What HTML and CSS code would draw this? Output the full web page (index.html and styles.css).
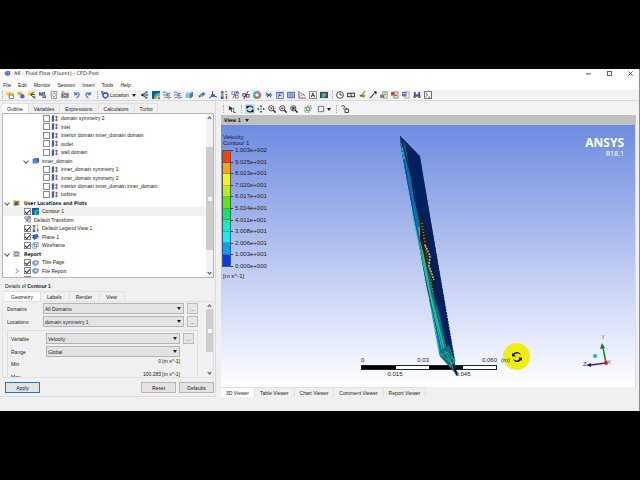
FILE: index.html
```
<!DOCTYPE html>
<html lang="en">
<head>
<meta charset="utf-8">
<title>A6 : Fluid Flow (Fluent) - CFD-Post</title>
<link rel="stylesheet" href="styles.css">
</head>
<body>
<svg class="defs" aria-hidden="true">
<defs>
<symbol id="app" viewBox="0 0 9 9"><path d="M1 3l3-2 4 1v4L5 8 1 6z" fill="#4653c4"/><path d="M2 4c1-2 4-2 5 0M2 5c2 2 4 2 5 0" stroke="#bcd3ff" fill="none"/></symbol>
<symbol id="load" viewBox="0 0 9 9"><path d="M0 1h6v4H0z" fill="#f5d442"/><path d="M3.5 3.5h5v5h-5z" fill="#fff" stroke="#6b5b2a" stroke-width=".8"/><path d="M4 5h4" stroke="#d9a520"/></symbol>
<symbol id="loadball" viewBox="0 0 9 9"><path d="M0 1h6v4H0z" fill="#f5d442"/><circle cx="6" cy="6" r="2.5" fill="#4668e8"/><path d="M2 2l3 2" stroke="#665"/></symbol>
<symbol id="loadarrow" viewBox="0 0 9 9"><path d="M0 1h6v4H0z" fill="#f5d442"/><path d="M7 1L3 4l4 4M3 4h5" stroke="#333" fill="none"/><circle cx="7" cy="7" r="1.3" fill="#278b35"/></symbol>
<symbol id="save" viewBox="0 0 9 9"><path d="M0 1h5v4H0zM4 5h4v3H4z" fill="#59628b"/><path d="M1 2h3M5 6h2" stroke="#dde"/><path d="M6 1v4" stroke="#333"/></symbol>
<symbol id="refresh" viewBox="0 0 9 9"><path d="M1.5.5h6v8h-6z" fill="#fff" stroke="#777" stroke-width=".8"/><path d="M3 4l2-2 1 2M6 5L4 7 3 5" stroke="#338b3f" fill="none"/></symbol>
<symbol id="camera" viewBox="0 0 9 9"><path d="M.5 2.5h8v5h-8z" fill="#ccc" stroke="#777" stroke-width=".8"/><path d="M1 1h2M7 3v4M2 3v4" stroke="#555"/><circle cx="4.5" cy="5" r="1.5" fill="#eee" stroke="#444" stroke-width=".8"/></symbol>
<symbol id="undo" viewBox="0 0 9 9"><path d="M2 1v3h3M2 4c2-3 5-2 5 0S5 7 4 8" fill="none" stroke="#4a78c8" stroke-width="1.3"/></symbol>
<symbol id="redo" viewBox="0 0 9 9"><path d="M7 1v3H4M7 4C5 1 2 2 2 4s2 3 3 4" fill="none" stroke="#4a78c8" stroke-width="1.3"/></symbol>
<symbol id="location" viewBox="0 0 9 9"><path d="M1 3l3-2 4 1 1 4-4 3-3-2z" fill="#2855c8"/><path d="M3 4l2-1 2 1v2L5 7 3 6z" fill="#e9f1ff"/><path d="M1 0v3M0 1h3" stroke="#16307a" stroke-width=".8"/></symbol>
<symbol id="vector" viewBox="0 0 9 9"><path d="M1 4.5h6M1 4.5L6 1.5M1 4.5L6 7.5" stroke="#333"/><path d="M5 0l3 1-2 2zM6 3l3 1.5L6 6zM5 9l3-1-2-2z" fill="#3a6ac0"/><circle cx="1.5" cy="4.5" r="1.3" fill="#26374d"/></symbol>
<symbol id="contour" viewBox="0 0 9 9"><path d="M0 0h9v9H0z" fill="#17589f"/><path d="M2 9c0-4 2-7 7-7v7z" fill="#22c7b3"/><path d="M4 9c0-2 2-4 5-4v4z" fill="#e7d83c"/><path d="M7 9V7h2v2z" fill="#e13d22"/></symbol>
<symbol id="contouritem" viewBox="0 0 9 9"><path d="M0 0h9v9H0z" fill="#17589f"/><path d="M3 9V5c0-2 2-3 6-3v2C6 4 6 5 6 6s1 1 3 1v2z" fill="#22b7c3"/><path d="M7 9V7h2v2z" fill="#e1502f"/></symbol>
<symbol id="stream" viewBox="0 0 9 9"><path d="M0 2c3-3 4 3 8 0M0 5c3-3 5 3 8 0M1 8c3-3 4 2 8-1" fill="none" stroke="#44658e"/><circle cx="5" cy="4.5" r="1.4" fill="#718bb0"/></symbol>
<symbol id="volume" viewBox="0 0 9 9"><path d="M1 3l2-2h6v5L7 8H1z" fill="#347ec2"/><path d="M1 3h5v5H1z" fill="#8bbde2"/><path d="M1 3l2-2h6L7 3z" fill="#b8e1ef"/><path d="M6 3l3-2M6 3v5" stroke="#245681" stroke-width=".7"/></symbol>
<symbol id="line" viewBox="0 0 9 9"><path d="M1 7l3-4 1 3 3-4" fill="none" stroke="#304b97"/><circle cx="2" cy="6" r="1.2" fill="#3954ae"/><circle cx="6" cy="3" r="1.4" fill="#3954ae"/></symbol>
<symbol id="axis" viewBox="0 0 9 9"><path d="M4 0v5l5 2M4 5L0 8" fill="none" stroke="#333"/><path d="M2 4l4-1 1 3-4 1z" fill="#3867be"/></symbol>
<symbol id="legend" viewBox="0 0 9 9"><path d="M1 0h3v3H1z" fill="#e34b3b"/><path d="M1 3h3v3H1z" fill="#35d4b0"/><path d="M1 6h3v3H1z" fill="#3050c7"/><path d="M6 1h2M6 4h2M6 7h2" stroke="#444"/><path d="M7.5 5v4" stroke="#c2323c"/></symbol>
<symbol id="transform" viewBox="0 0 9 9"><path d="M1 1h3v3H1zM5 5h3v3H5z" fill="#fff" stroke="#6274a7"/><path d="M7 1L2 8M5 1l3 0v3" stroke="#353d64" fill="none"/></symbol>
<symbol id="clip" viewBox="0 0 9 9"><path d="M1 3h3v3H1zM5 4h3v3H5z" fill="#e8ecf4" stroke="#445"/><path d="M7 0L2 9" stroke="#333"/></symbol>
<symbol id="wheel" viewBox="0 0 9 9"><path d="M4.5 4.5V0A4.5 4.5 0 0 1 9 4.5z" fill="#db5bd0"/><path d="M4.5 4.5H9A4.5 4.5 0 0 1 4.5 9z" fill="#ef5b49"/><path d="M4.5 4.5V9A4.5 4.5 0 0 1 0 4.5z" fill="#3fb768"/><path d="M4.5 4.5H0A4.5 4.5 0 0 1 4.5 0z" fill="#31bde3"/><circle cx="4.5" cy="4.5" r="1.8" fill="#fff"/></symbol>
<symbol id="var" viewBox="0 0 9 9"><path d="M1 2l6 5M7 2L2 7M1 4.5h7" stroke="#26417a" stroke-width="1.1"/></symbol>
<symbol id="expr" viewBox="0 0 9 9"><path d="M.5 1.5h8v7h-8z" fill="#d5dcf5" stroke="#6278ae"/><path d="M1 2h7" stroke="#3657b3"/><path d="M5 3C3 3 4 7 2 7M3 5h3" fill="none" stroke="#3a4db0"/></symbol>
<symbol id="table" viewBox="0 0 9 9"><path d="M.5 1.5h8v6h-8z" fill="#dbe5fa" stroke="#39569d"/><path d="M0 3.5h9M0 5.5h9M3.5 2v6M6 2v6" stroke="#5b76b4" stroke-width=".8"/></symbol>
<symbol id="chart" viewBox="0 0 9 9"><path d="M1 0v8h8" fill="none" stroke="#555"/><path d="M2 2l3 1 3 3M2 6l3-2 3 1" fill="none" stroke="#a05a62" stroke-width=".8"/></symbol>
<symbol id="comment" viewBox="0 0 9 9"><path d="M.5.5h8v8h-8z" fill="#fff" stroke="#777"/><path d="M2.5 7l2-5 2 5M3 5.3h3" stroke="#333" fill="none"/></symbol>
<symbol id="figure" viewBox="0 0 9 9"><path d="M0 1h9v7H0z" fill="#36448c"/><path d="M2 3l3-1 2 2-2 4-3-1z" fill="#30bf60"/><path d="M5 3l3 1-2 3z" fill="#e64930"/><path d="M4 3l2 1-1 1z" fill="#f2e343"/></symbol>
<symbol id="clock" viewBox="0 0 9 9"><circle cx="4.5" cy="4.5" r="3.8" fill="#fff" stroke="#333"/><path d="M4.5 2v2.5H7" fill="none" stroke="#333"/></symbol>
<symbol id="film" viewBox="0 0 9 9"><path d="M0 2h9v5H0z" fill="#333"/><path d="M1 3.2h3v2.6H1zM5 3.2h3v2.6H5z" fill="#e6e6e6"/></symbol>
<symbol id="quick" viewBox="0 0 9 9"><path d="M1 7h6L6 4z" fill="#d7cf39"/><path d="M8 0L3 6M2 5l4 1" stroke="#464b2d"/><path d="M5 4h3v3H5z" fill="#7aa544"/></symbol>
<symbol id="probe" viewBox="0 0 9 9"><path d="M1 8l5-5" stroke="#444" stroke-width="1.2"/><path d="M5 1l3 3 1-3-2-1z" fill="#333"/></symbol>
<symbol id="page" viewBox="0 0 9 9"><path d="M3 0h5v8H3z" fill="#f7f1d5" stroke="#767055" stroke-width=".7"/><path d="M0 4h5v4H0z" fill="#759a78"/><path d="M4 2h3M5 4h2M1 6h3" stroke="#555" stroke-width=".7"/></symbol>
<symbol id="pagered" viewBox="0 0 9 9"><path d="M3 1h5v7H3z" fill="#ead6b7" stroke="#8a6e50" stroke-width=".7"/><path d="M0 1h4v4H0z" fill="#b34d43"/><path d="M4 5h3" stroke="#655"/></symbol>
<symbol id="pageblue" viewBox="0 0 9 9"><path d="M3 1h5v7H3z" fill="#f1eee1" stroke="#888" stroke-width=".7"/><path d="M0 1h5v5H0z" fill="#616bc5"/><path d="M1 3h3M6 6h1" stroke="#eef"/></symbol>
<symbol id="fan" viewBox="0 0 9 9"><path d="M1 1h2v3h3V1h2v7H6V6H3v2H1z" fill="#374f91"/><path d="M0 6h9" stroke="#65749c"/></symbol>
<symbol id="cmd" viewBox="0 0 9 9"><path d="M.5.5h8v8h-8z" fill="#fff" stroke="#555"/><path d="M2 2l2 2.3L2 6.5M5 6.8h2" fill="none" stroke="#333"/></symbol>
<symbol id="pick" viewBox="0 0 9 9"><path d="M1 1l5 3-2 .5 1 3-1 .5-1-3-2 1z" fill="#333"/><path d="M6.5 3v5.500H9" fill="none" stroke="#555"/></symbol>
<symbol id="rotate" viewBox="0 0 9 9"><path d="M1 4V1.5h2.5M1.5 3.5C3 .5 6 .5 8 3M8 5v2.5H5.500M7.500 5.500C6 8.500 3 8.500 1 6" fill="none" stroke="#111" stroke-width="1.2"/></symbol>
<symbol id="pan" viewBox="0 0 9 9"><path d="M4.500 0L3 2h3zM4.500 9L3 7h3zM0 4.500L2 3v3zM9 4.500L7 3v3z" fill="#222"/><path d="M4.500 3v3M3 4.500h3" stroke="#777" stroke-width=".7"/></symbol>
<symbol id="zoom" viewBox="0 0 9 9"><circle cx="3.700" cy="3.700" r="2.900" fill="#fff" stroke="#333"/><path d="M6 6l2.600 2.600" stroke="#222" stroke-width="1.500"/><path d="M2.300 3.700h3M3.700 2.300v3" stroke="#444" stroke-width=".8"/></symbol>
<symbol id="zoombox" viewBox="0 0 9 9"><circle cx="3.700" cy="3.700" r="2.900" fill="#fff" stroke="#333"/><path d="M2.300 2.300h3v3h-3z" fill="#34466e"/><path d="M6 6l2.600 2.600" stroke="#222" stroke-width="1.500"/></symbol>
<symbol id="fit" viewBox="0 0 9 9"><path d="M1 3l3-2h4v4L6 8H1z" fill="#dcebdc" stroke="#3f9052" stroke-dasharray="2 1"/><path d="M3 3h3v3H3z" fill="#fff" stroke="#4a5a4d" stroke-width=".8"/></symbol>
<symbol id="square" viewBox="0 0 9 9"><path d="M1.500 1.500h6v6h-6z" fill="#f2f2ff" stroke="#666682"/></symbol>
<symbol id="help" viewBox="0 0 9 9"><path d="M1 2c0-2 3-2 3 0 0 1-1 1-1 3M4.500 4.500h4v4h-4zM6 3v2" fill="none" stroke="#333"/></symbol>
<symbol id="boundary" viewBox="0 0 9 9"><path d="M1 1l3-1v8L1 9z" fill="#2b67b9"/><path d="M5 2.500h4M5 6.500h4M7 1v7" stroke="#9e3548"/></symbol>
<symbol id="box" viewBox="0 0 9 9"><path d="M1 3l2-1.500h6V6L7.500 8H1z" fill="#3153b5"/><path d="M1 3h6v5H1z" fill="#5a84df"/></symbol>
<symbol id="plots" viewBox="0 0 9 9"><path d="M0 1h3l1 1h5v7H0z" fill="#ead465"/><path d="M2 3h5v5H2z" fill="#308f54"/><path d="M4 3h3v3H4z" fill="#d34936"/><path d="M2 5h3v3H2z" fill="#304aa5"/></symbol>
<symbol id="report" viewBox="0 0 9 9"><path d="M0 1h3l1 1h5v7H0z" fill="#ead465"/><path d="M2 2h5v6H2z" fill="#6e8ddf"/><path d="M3 4h3v2H3z" fill="#dbe7ff"/></symbol>
<symbol id="plane" viewBox="0 0 9 9"><path d="M0 3l7-2 2 4-6 4z" fill="#3f69d4"/><path d="M2 2v6M0 6h3" stroke="#243c8c" stroke-width=".8"/></symbol>
<symbol id="wire" viewBox="0 0 9 9"><path d="M1 3h5v5H1zM3 1h5v5H6M1 3l2-2M6 3l2-2M3 1v5h3" fill="none" stroke="#4b7292" stroke-width=".8"/></symbol>
<symbol id="pageitem" viewBox="0 0 9 9"><path d="M0 4l4-3 5 2-1 4-4 2-3-2z" fill="#7492de"/><path d="M3 4l3-1 1 2-3 2z" fill="#d1defc"/></symbol>
</defs>
</svg>

<div class="window">
  <header class="titlebar">
    <svg class="icon"><use href="#app"/></svg>
    <span class="title">A6 : Fluid Flow (Fluent) - CFD-Post</span>
    <div class="winbuttons">
      <button aria-label="Minimize"><svg viewBox="0 0 6 6"><path d="M0 3.500h6"/></svg></button>
      <button aria-label="Maximize"><svg viewBox="0 0 6 6"><path d="M.5.5h5v5h-5z"/></svg></button>
      <button aria-label="Close"><svg viewBox="0 0 6 6"><path d="M.5.5l5 5M5.500.5l-5 5"/></svg></button>
    </div>
  </header>
  <nav class="menubar"><button>File</button><button>Edit</button><button>Monitor</button><button>Session</button><button>Insert</button><button>Tools</button><button>Help</button></nav>

  <div class="toolbar main-tools">
    <i class="grip"></i>
    <div class="group g63"><button aria-label="Load results"><svg><use href="#load"/></svg></button><button aria-label="Load state"><svg><use href="#loadball"/></svg></button><button aria-label="Import"><svg><use href="#loadarrow"/></svg></button><button aria-label="Save"><svg><use href="#save"/></svg></button><button aria-label="Refresh"><svg><use href="#refresh"/></svg></button><button aria-label="Snapshot"><svg><use href="#camera"/></svg></button></div>
    <div class="group g19"><button aria-label="Undo"><svg><use href="#undo"/></svg></button><button aria-label="Redo"><svg><use href="#redo"/></svg></button></div>
    <i class="grip"></i>
    <button class="location"><svg><use href="#location"/></svg>Location<i class="caret"></i></button>
    <div class="group g52"><button aria-label="Vector"><svg><use href="#vector"/></svg></button><button aria-label="Contour"><svg><use href="#contour"/></svg></button><button aria-label="Streamline"><svg><use href="#stream"/></svg></button><button aria-label="Particle track"><svg><use href="#stream"/></svg></button><button aria-label="Volume rendering"><svg><use href="#volume"/></svg></button></div>
    <div class="group g63"><button aria-label="Line"><svg><use href="#line"/></svg></button><button aria-label="Coordinate frame"><svg><use href="#axis"/></svg></button><button aria-label="Legend"><svg><use href="#legend"/></svg></button><button aria-label="Instance transform"><svg><use href="#transform"/></svg></button><button aria-label="Clip plane"><svg><use href="#clip"/></svg></button><button aria-label="Color map"><svg><use href="#wheel"/></svg></button></div>
    <div class="group g63"><button aria-label="Variable"><svg><use href="#var"/></svg></button><button aria-label="Expression"><svg><use href="#expr"/></svg></button><button aria-label="Table"><svg><use href="#table"/></svg></button><button aria-label="Chart"><svg><use href="#chart"/></svg></button><button aria-label="Comment"><svg><use href="#comment"/></svg></button><button aria-label="Figure"><svg><use href="#figure"/></svg></button></div>
    <i class="grip"></i>
    <div class="group g96"><button aria-label="Timestep"><svg><use href="#clock"/></svg></button><button aria-label="Animation"><svg><use href="#film"/></svg></button><button aria-label="Quick editor"><svg><use href="#quick"/></svg></button><button aria-label="Probe"><svg><use href="#probe"/></svg></button><button aria-label="Function calculator"><svg><use href="#page"/></svg></button><button aria-label="Macro calculator"><svg><use href="#pagered"/></svg></button><button aria-label="Mesh calculator"><svg><use href="#pageblue"/></svg></button><button aria-label="Turbo"><svg><use href="#fan"/></svg></button><button aria-label="Command editor"><svg><use href="#cmd"/></svg></button></div>
  </div>

  <main class="work">
    <section class="side">
      <div class="tabs"><button class="on">Outline</button><button>Variables</button><button>Expressions</button><button>Calculators</button><button>Turbo</button></div>
      <div class="treebox">
        <ul class="tree">
          <li class="l3"><label><input type="checkbox"><svg><use href="#boundary"/></svg>domain symmetry 2</label></li>
          <li class="l3"><label><input type="checkbox"><svg><use href="#boundary"/></svg>inlet</label></li>
          <li class="l3"><label><input type="checkbox"><svg><use href="#boundary"/></svg>interior domain inner_domain domain</label></li>
          <li class="l3"><label><input type="checkbox"><svg><use href="#boundary"/></svg>outlet</label></li>
          <li class="l3"><label><input type="checkbox"><svg><use href="#boundary"/></svg>wall domain</label></li>
          <li class="l2"><i class="open"></i><svg><use href="#box"/></svg>inner_domain</li>
          <li class="l3"><label><input type="checkbox"><svg><use href="#boundary"/></svg>inner_domain symmetry 1</label></li>
          <li class="l3"><label><input type="checkbox"><svg><use href="#boundary"/></svg>inner_domain symmetry 2</label></li>
          <li class="l3"><label><input type="checkbox"><svg><use href="#boundary"/></svg>interior domain inner_domain inner_domain</label></li>
          <li class="l3"><label><input type="checkbox"><svg><use href="#boundary"/></svg>turbine</label></li>
          <li class="l0"><i class="open"></i><svg><use href="#plots"/></svg>User Locations and Plots</li>
          <li class="l1 selected"><label><input type="checkbox" checked><svg><use href="#contouritem"/></svg>Contour 1</label></li>
          <li class="l1"><svg><use href="#transform"/></svg>Default Transform</li>
          <li class="l1"><label><input type="checkbox" checked><svg><use href="#legend"/></svg>Default Legend View 1</label></li>
          <li class="l1"><label><input type="checkbox" checked><svg><use href="#plane"/></svg>Plane 1</label></li>
          <li class="l1"><label><input type="checkbox" checked><svg><use href="#wire"/></svg>Wireframe</label></li>
          <li class="l0"><i class="open"></i><svg><use href="#report"/></svg>Report</li>
          <li class="l1"><label><input type="checkbox" checked><svg><use href="#pageitem"/></svg>Title Page</label></li>
          <li class="l1 shut"><i class="closed"></i><label><input type="checkbox" checked><svg><use href="#pageitem"/></svg>File Report</label></li>
          <li class="l1 shut"><i class="closed"></i><label><input type="checkbox" checked><svg><use href="#pageitem"/></svg>Mesh Report</label></li>
        </ul>
        <div class="scroll tree-scroll"><i class="up"></i><span class="track"><b></b></span><i class="down"></i></div>
      </div>

      <h2 class="details-title">Details of <b>Contour 1</b></h2>
      <div class="tabs detail-tabs"><button class="on">Geometry</button><button>Labels</button><button>Render</button><button>View</button></div>
      <div class="details">
        <form class="form">
          <div class="field"><label for="domains">Domains</label><span class="pick"><select id="domains"><option>All Domains</option></select></span><button type="button" aria-label="Choose domains">...</button></div>
          <div class="field"><label for="locations">Locations</label><span class="pick"><select id="locations"><option>domain symmetry 1</option></select></span><button type="button" aria-label="Choose locations">...</button></div>
          <div class="box">
            <div class="field"><label for="variable">Variable</label><span class="pick"><select id="variable"><option>Velocity</option></select></span><button type="button" aria-label="Choose variable">...</button></div>
            <div class="field wide"><label for="range">Range</label><span class="pick"><select id="range"><option>Global</option></select></span></div>
            <div class="value"><span>Min</span><output>0 [m s^-1]</output></div>
            <div class="value"><span>Max</span><output>100.283 [m s^-1]</output></div>
          </div>
        </form>
        <div class="scroll detail-scroll"><i class="up"></i><span class="track"><b></b></span><i class="down"></i></div>
      </div>
      <div class="actions"><button class="apply">Apply</button><button>Reset</button><button>Defaults</button></div>
    </section>

    <section class="view">
      <div class="toolbar view-tools">
        <i class="grip"></i><button aria-label="Select"><svg><use href="#pick"/></svg></button>
        <i class="grip"></i>
        <div class="group g52"><button class="active" aria-label="Rotate"><svg><use href="#rotate"/></svg></button><button aria-label="Pan"><svg><use href="#pan"/></svg></button><button aria-label="Zoom"><svg><use href="#zoom"/></svg></button><button aria-label="Zoom in"><svg><use href="#zoom"/></svg></button><button aria-label="Zoom box"><svg><use href="#zoombox"/></svg></button></div>
        <button aria-label="Fit view"><svg><use href="#fit"/></svg></button>
        <button class="layout" aria-label="Viewport layout"><svg><use href="#square"/></svg><i class="caret"></i></button>
        <i class="grip"></i><button aria-label="Help"><svg><use href="#help"/></svg></button>
      </div>
      <button class="viewbar">View 1<i class="caret"></i></button>
      <div class="canvas">
        <div class="legend">
          <p>Velocity<br>Contour 1</p>
          <div class="scale">
            <div class="bands"><i class="c1"></i><i class="c2"></i><i class="c3"></i><i class="c4"></i><i class="c5"></i><i class="c6"></i><i class="c7"></i><i class="c8"></i><i class="c9"></i><i class="c10"></i></div>
            <ol><li>1.003e+002</li><li>9.025e+001</li><li>8.023e+001</li><li>7.020e+001</li><li>6.017e+001</li><li>5.014e+001</li><li>4.011e+001</li><li>3.008e+001</li><li>2.006e+001</li><li>1.003e+001</li><li>0.000e+000</li></ol>
          </div>
          <p>[m s^-1]</p>
        </div>
        <div class="brand"><b>ANSYS</b><span>R18.1</span></div>
        <div class="cursor"><svg viewBox="0 0 12 12"><path d="M1 2v3.500h4L3.500 4C5 2 8 2 10 4.500 9 0 4 0 2.300 3zM11 10V6.500H7L8.500 8C7 10 4 10 2 7.500 3 12 8 12 9.700 9z" fill="#161c12"/></svg></div>
        <div class="ruler">
          <div class="above"><span>0</span><span>0.03</span><span>0.060</span><span class="unit">(m)</span></div>
          <div class="bar"><i></i><i></i><i></i><i></i></div>
          <div class="below"><span>0.015</span><span>0.045</span></div>
        </div>
        <svg class="blade" viewBox="0 0 60 242" aria-hidden="true">
          <path d="M1 1L21 21 56 230 58 240 41 221 2 13z" fill="#07296b"/>
          <path d="M1 1L6 10 52 232 57 239 41 221 2 13z" fill="#0b6fa4"/>
          <path d="M7 11L20 21 56 228 50 224 14 58z" fill="#02205f"/>
          <path d="M3 13L41 221" stroke="#19bfcf" stroke-width="1.500" stroke-dasharray="3 1"/>
          <path d="M5 25L16 85 28 150 45 223" stroke="#0a4f9f" stroke-width="1.500" fill="none"/>
          <path d="M13 77L44 219" stroke="#15cbb4" stroke-width="1"/>
          <path d="M20 92L22 108 31 158 45 213" fill="none" stroke="#2ccc5c" stroke-width="1.500"/>
          <path d="M21 78L26 92 36 146 38 173 30 140 21 105z" fill="#211d1c"/>
          <path d="M23 88L27 116 34 158" fill="none" stroke="#8a8678" stroke-width="1.500" stroke-dasharray="1 2"/>
          <path d="M26 110L31 121 30 131 35 145" stroke="#aebdd4" fill="none" stroke-width="1.500" stroke-dasharray="2 1"/>
          <path d="M1 1L20 21 56 227" fill="none" stroke="#17203b" stroke-width="1" stroke-dasharray="2 1"/>
          <path d="M2 3L12 40" stroke="#102b40" stroke-width="1.500"/>
          <path d="M40 217L50 210 55 224 57 238z" fill="#0d7180"/>
          <path d="M41 221L48 217 56 226 50 231M46 216L57 238M41 218L55 231" fill="none" stroke="#22ad82" stroke-width="1"/>
          <path d="M54 229L58 240" stroke="#10181c" stroke-width="2"/>
        </svg>
        <svg class="triad" viewBox="0 0 32 36">
          <path d="M23 28L20 13" stroke="#168a1c" stroke-width="1.500"/><path d="M19 8l-2 6 5-1z" fill="#0d8416"/>
          <path d="M23 28L8 30" stroke="#2525b5" stroke-width="1.500"/><path d="M3 30l5-2v4z" fill="#1b1b9a"/>
          <circle cx="12" cy="21" r="2" fill="#10b6bd"/><circle cx="23" cy="28" r="2" fill="#e01818"/>
          <text x="18" y="4" fill="#359653">Y</text><text x="0" y="31" fill="#2a2aa8">Z</text><text x="24" y="29" fill="#d3435d">X</text>
        </svg>
      </div>
      <div class="tabs view-tabs"><button class="on">3D Viewer</button><button>Table Viewer</button><button>Chart Viewer</button><button>Comment Viewer</button><button>Report Viewer</button></div>
    </section>
  </main>
  <footer class="status"></footer>
</div>
</body>
</html>
```
FILE: styles.css
```
* { box-sizing: border-box; }
body {
  margin: 0;
  height: 100vh;
  padding: 69px 0;
  display: flex;
  background: #000;
  color: #222;
  font: 5px/8px "Liberation Sans", sans-serif;
}
button, select, input { font: inherit; color: inherit; margin: 0; padding: 0; border: 0; background: none; }
ul, ol, p, h2 { margin: 0; padding: 0; list-style: none; font: inherit; }
i { font-style: normal; }
svg { display: block; flex: none; }
.defs { position: absolute; width: 0; height: 0; }

.window { flex: 1; min-width: 0; display: flex; flex-direction: column; background: #f0f0f0; border-right: 1px solid #c9707c; }

.titlebar { display: flex; flex: none; align-items: center; gap: 3px; height: 10px; padding: 0 6px 2px 4px; background: #fff; }
.titlebar .icon { width: 7px; height: 7px; }
.title { flex: 1; font-family: "DejaVu Sans", sans-serif; }
.winbuttons { display: flex; gap: 16px; }
.winbuttons svg { width: 5px; height: 5px; fill: none; stroke: #333; stroke-width: 1; }
.menubar { display: flex; flex: none; gap: 7px; height: 11px; padding: 0 3px; background: #fff; align-items: center; }

.toolbar { display: flex; flex: none; align-items: center; background: #f3f3f3; }
.toolbar svg { width: 8px; height: 8px; }
.toolbar button { flex: none; }
.main-tools { height: 11px; padding: 0 2px; border-bottom: 1px solid #d8d8d8; }
.grip { width: 1px; height: 8px; margin: 0 3px 0 0; border-left: 1px dotted #aaa; }
.group { display: flex; justify-content: space-between; margin-right: 5px; }
.g19 { width: 19px; }
.g52 { width: 52px; }
.g63 { width: 63px; margin-right: 4px; }
.g96 { width: 96px; }
.location { display: flex; align-items: center; gap: 1px; width: 36px; margin-right: 4px; }
.caret { width: 0; height: 0; margin-left: 2px; border: 2px solid transparent; border-top: 3px solid #222; border-bottom: 0; }

.work { flex: 1; min-height: 0; display: grid; grid-template: minmax(0, 1fr) / 216px 1fr; column-gap: 5px; padding-right: 3px; }
.side { display: flex; flex-direction: column; min-height: 0; padding: 2px 1px 0 2px; border-right: 1px solid #dcdcdc; border-bottom: 1px solid #dcdcdc; }

.tabs { display: flex; flex: none; }
.tabs button { height: 10px; padding: 0 5px; border: 1px solid #e0e0e0; border-width: 1px 1px 0 0; }
.tabs .on { background: #fff; }

.treebox { flex: none; display: flex; height: 165px; border: 1px solid #b8b8b8; background: #fff; overflow: hidden; }
.tree { flex: 1; min-width: 0; display: grid; grid-template-rows: repeat(19, 1fr) 2px; overflow: hidden; line-height: 8px; }
.tree li, .tree label { display: flex; align-items: center; gap: 1px; min-height: 0; white-space: nowrap; }
.tree li { overflow: hidden; }
.tree li:last-child { height: 8px; }
.tree svg { width: 7px; height: 7px; margin-right: 2px; }
.l0 { padding-left: 2px; font: bold 5px/8px "DejaVu Sans Condensed", "DejaVu Sans", sans-serif; }
.l0 svg { margin-right: 0; }
.l1 { padding-left: 21px; }
.l2 { padding-left: 21px; }
.l2 i { margin-right: 3px; }
.l3 { padding-left: 40px; }
.tree .l0 { gap: 4px; }
.tree .shut { padding-left: 11px; gap: 6px; }
.selected { background: #f0f0f0; }
.tree input { appearance: none; width: 7px; height: 7px; flex: none; border: 1px solid #8a8a8a; background: #fff; display: grid; place-items: center; }
.tree input:checked::after { content: ""; width: 4px; height: 2px; border: solid #333; border-width: 0 0 1px 1px; transform: rotate(-45deg); }
.open, .closed { width: 4px; height: 4px; flex: none; display: grid; place-items: center; }
.open::before, .closed::before { content: ""; width: 3px; height: 3px; border: solid #555; border-width: 0 1px 1px 0; transform: rotate(45deg); }
.closed::before { border-color: #aaa; transform: rotate(-45deg); }

.scroll { width: 7px; flex: none; display: flex; flex-direction: column; align-items: center; background: #f1f1f1; }
.scroll > i { width: 3px; height: 3px; margin: 3px 0 1px; border: solid #444; border-width: 1px 0 0 1px; transform: rotate(45deg); }
.scroll > .down { margin: 1px 0 3px; transform: rotate(225deg); }
.track { flex: 1; align-self: stretch; display: flex; flex-direction: column; }
.track b { display: grid; place-items: center; background: #cdcdcd; }
.track b::after { content: ""; width: 4px; height: 4px; background: #f8f8f8; }
.tree-scroll .track { padding: 26px 0 20px; }
.tree-scroll b { flex: 1; }
.detail-scroll b { height: 43px; }

.details-title { flex: none; height: 13px; padding: 4px 3px 0; line-height: 8px; }
.detail-tabs { padding-left: 3px; }
.detail-tabs button { padding: 0 7px 0 6px; }
.details { flex: 1; min-height: 0; display: flex; overflow: hidden; border: 1px solid #e2e2e2; }
.form { flex: 1; min-width: 0; overflow: hidden; padding: 1px 8px 0 4px; }
.field { display: flex; align-items: center; height: 11px; margin-bottom: 2px; }
.field label { flex: none; width: 36px; }
.pick { position: relative; flex: 1; }
.pick select { display: block; appearance: none; width: 100%; height: 11px; padding: 0 1px; border: 1px solid #b5b5b5; background: #e3e3e3; }
.pick::after { content: ""; position: absolute; right: 3px; top: 4px; border: 2px solid transparent; border-top: 3px solid #222; border-bottom: 0; pointer-events: none; }
.field button { width: 11px; height: 11px; margin-left: 3px; border: 1px solid #bbb; background: #e6e6e6; line-height: 8px; }
.box { margin-top: 3px; padding: 2px 3px 0 3px; border: 1px solid #dedede; border-bottom: 0; }
.box .field label { width: 35px; }
.box .wide { margin-bottom: 0; }
.wide .pick { margin-right: 14px; }
.value { display: flex; justify-content: space-between; height: 13px; padding-right: 14px; }
.value span { padding-top: 3px; }

.actions { display: flex; flex: none; gap: 3px; padding: 4px 0 3px 3px; }
.actions button { width: 35px; height: 11px; border: 1px solid #b5b5b5; background: #e3e3e3; }
.actions .apply { margin-right: auto; border-color: #1379d2; }

.view { min-width: 0; min-height: 0; display: flex; flex-direction: column; }
.view-tools { height: 14px; padding: 2px 2px 0; }
.view-tools .g52 { margin-right: 6px; }
.view-tools > button { margin-right: 5px; }
.view-tools > .grip { margin-right: 4px; }
.view-tools .active { background: #c3def5; box-shadow: 0 0 0 1px #c3def5; }
.view-tools .layout { display: flex; align-items: center; }
.viewbar { display: flex; flex: none; align-items: center; gap: 2px; height: 10px; padding: 0 3px; background: #c0c0c0; font: bold 5px/8px "DejaVu Sans Condensed", "DejaVu Sans", sans-serif; }
.canvas { position: relative; flex: 1; min-height: 0; overflow: hidden; background: linear-gradient(#6d8be0, #a8b9ec 40%, #dce3fa 75%, #fff); border-right: 1px solid #ddd; font: 6px/7px "Liberation Sans", sans-serif; color: #181c30; }
.legend { padding: 9px 1px; }
.legend p { line-height: 6px; padding-left: 1px; }
.scale { display: flex; margin: 1px 0 3px; padding: 3px 0; }
.bands { width: 9px; height: 117px; display: flex; flex-direction: column; border: 1px solid #4c5570; }
.bands i { flex: 1; border-bottom: 1px solid rgb(40 50 50 / 30%); }
.c1 { background: #ff3d00; }
.c2 { background: #ffa500; }
.c3 { background: #fff600; }
.c4 { background: #b6f500; }
.c5 { background: #52ed00; }
.c6 { background: #00ef65; }
.c7 { background: #00f5b8; }
.c8 { background: #00f4ff; }
.c9 { background: #00a2ff; }
.c10 { background: #0038ff; }
.scale ol { display: flex; flex-direction: column; justify-content: space-between; margin: -3px 0; }
.scale li { display: flex; align-items: center; gap: 2px; }
.scale li::before { content: ""; width: 2px; height: 1px; background: #333a55; }
.brand { position: absolute; top: 10px; right: 11px; display: flex; flex-direction: column; align-items: flex-end; color: #fff; font: 7px/8px "Noto Sans", sans-serif; }
.brand b { font-size: 12px; line-height: 15px; }
.blade { position: absolute; left: 178px; top: 10px; width: 60px; height: 242px; }
.ruler { position: absolute; left: 140px; bottom: 9px; width: 136px; }
.above { position: relative; display: flex; justify-content: space-between; }
.unit { position: absolute; left: 100%; margin-left: 4px; }
.bar { display: grid; grid-template-columns: repeat(4, 1fr); height: 5px; margin-top: 1px; border: 1px solid #222; background: #fff; }
.bar i:nth-child(odd) { background: #000; }
.below { display: flex; justify-content: space-around; margin-top: 1px; }
.cursor { position: absolute; left: 282px; bottom: 17px; width: 27px; height: 27px; border-radius: 50%; background: #f0ee0b; display: grid; place-items: center; }
.cursor svg { width: 12px; height: 12px; }
.triad { position: absolute; right: 20px; bottom: 16px; width: 32px; height: 36px; overflow: visible; }
.triad text { font-size: 6px; }
.view-tabs button { padding: 0 5px; }
.view-tabs .on { background: #fff; }
.status { flex: none; height: 14px; }
```
